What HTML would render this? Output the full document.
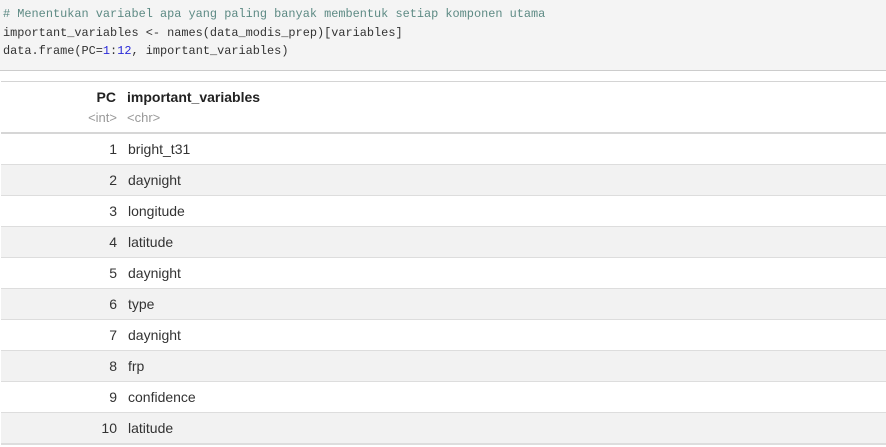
<!DOCTYPE html>
<html><head><style>
body{margin:0;width:886px;height:447px;background:#fff;position:relative;overflow:hidden;font-family:"Liberation Sans",sans-serif;}
.code{position:absolute;left:0;top:0;width:886px;height:70px;background:#f4f4f4;border-bottom:1px solid #ccc;}
.code pre{margin:0;position:absolute;left:3px;top:5px;font-family:"Liberation Mono",monospace;font-size:11.9px;line-height:18.5px;color:#333;}
.c{color:#5d8a84}.n{color:#2a2ad8}
.hl{position:absolute;left:1px;width:885px;height:1px;background:#ddd;}
.row{position:absolute;left:1px;width:885px;height:30px;font-size:14px;color:#333;border-bottom:1px solid #ddd;}
.row .a{position:absolute;right:769px;top:7px;}
.row .b{position:absolute;left:127px;top:7px;}
.g{background:#f2f2f2}
</style></head><body>
<div class="code"><pre><span class="c"># Menentukan variabel apa yang paling banyak membentuk setiap komponen utama</span>
important_variables &lt;- names(data_modis_prep)[variables]
data.frame(PC=<span class="n">1</span>:<span class="n">12</span>, important_variables)</pre></div>
<div class="hl" style="top:81px;background:#d4d4d4"></div>
<div style="position:absolute;left:1px;top:89px;width:115px;text-align:right;font-weight:bold;font-size:14px;color:#222">PC</div>
<div style="position:absolute;left:127px;top:89px;font-weight:bold;font-size:14px;color:#222">important_variables</div>
<div style="position:absolute;left:1px;top:110px;width:116px;text-align:right;font-size:13px;color:#999">&lt;int&gt;</div>
<div style="position:absolute;left:127px;top:110px;font-size:13px;color:#999">&lt;chr&gt;</div>
<div class="hl" style="top:132px;height:2px;background:#d6d6d6"></div>
<div class="row" style="top:134px"><span class="a">1</span><span class="b">bright_t31</span></div>
<div class="row g" style="top:165px"><span class="a">2</span><span class="b">daynight</span></div>
<div class="row" style="top:196px"><span class="a">3</span><span class="b">longitude</span></div>
<div class="row g" style="top:227px"><span class="a">4</span><span class="b">latitude</span></div>
<div class="row" style="top:258px"><span class="a">5</span><span class="b">daynight</span></div>
<div class="row g" style="top:289px"><span class="a">6</span><span class="b">type</span></div>
<div class="row" style="top:320px"><span class="a">7</span><span class="b">daynight</span></div>
<div class="row g" style="top:351px"><span class="a">8</span><span class="b">frp</span></div>
<div class="row" style="top:382px"><span class="a">9</span><span class="b">confidence</span></div>
<div class="row g" style="top:413px;border-bottom:2px solid #ddd"><span class="a">10</span><span class="b">latitude</span></div>
</body></html>
